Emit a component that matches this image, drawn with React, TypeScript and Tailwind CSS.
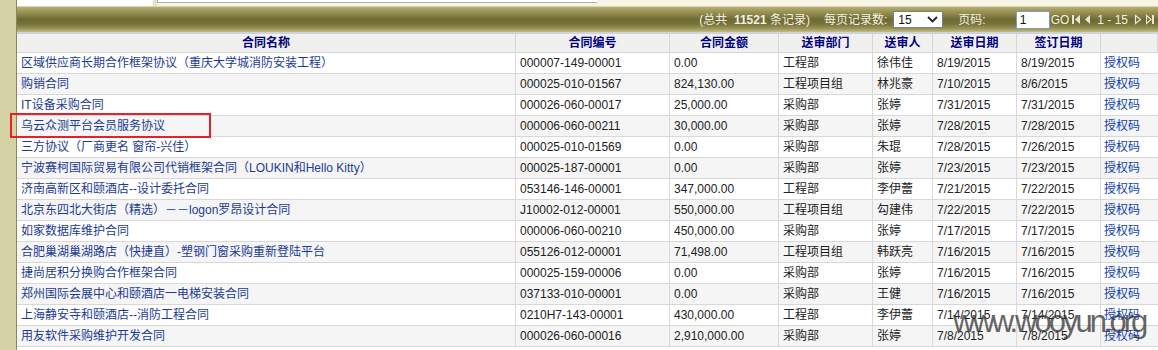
import React from "react"

const rows = [
  ["区域供应商长期合作框架协议（重庆大学城消防安装工程）", "000007-149-00001", "0.00", "工程部", "徐伟佳", "8/19/2015", "8/19/2015"],
  ["购销合同", "000025-010-01567", "824,130.00", "工程项目组", "林兆豪", "7/10/2015", "8/6/2015"],
  ["IT设备采购合同", "000026-060-00017", "25,000.00", "采购部", "张婷", "7/31/2015", "7/31/2015"],
  ["乌云众测平台会员服务协议", "000006-060-00211", "30,000.00", "采购部", "张婷", "7/28/2015", "7/28/2015"],
  ["三方协议（厂商更名 窗帘-兴佳）", "000025-010-01569", "0.00", "采购部", "朱琨", "7/28/2015", "7/26/2015"],
  ["宁波赛柯国际贸易有限公司代销框架合同（LOUKIN和Hello Kitty）", "000025-187-00001", "0.00", "采购部", "张婷", "7/23/2015", "7/23/2015"],
  ["济南高新区和颐酒店--设计委托合同", "053146-146-00001", "347,000.00", "工程部", "李伊蕾", "7/21/2015", "7/22/2015"],
  ["北京东四北大街店（精选）－－logon罗昂设计合同", "J10002-012-00001", "550,000.00", "工程项目组", "勾建伟", "7/22/2015", "7/22/2015"],
  ["如家数据库维护合同", "000006-060-00210", "450,000.00", "采购部", "张婷", "7/17/2015", "7/17/2015"],
  ["合肥巢湖巢湖路店（快捷直）-塑钢门窗采购重新登陆平台", "055126-012-00001", "71,498.00", "工程项目组", "韩跃亮", "7/16/2015", "7/16/2015"],
  ["捷尚居积分换购合作框架合同", "000025-159-00006", "0.00", "采购部", "张婷", "7/16/2015", "7/16/2015"],
  ["郑州国际会展中心和颐酒店一电梯安装合同", "037133-010-00001", "0.00", "采购部", "王健", "7/16/2015", "7/16/2015"],
  ["上海静安寺和颐酒店--消防工程合同", "0210H7-143-00001", "430,000.00", "工程部", "李伊蕾", "7/14/2015", "7/14/2015"],
  ["用友软件采购维护开发合同", "000026-060-00016", "2,910,000.00", "采购部", "张婷", "7/8/2015", "7/8/2015"],
]

const headers = ["合同名称", "合同编号", "合同金额", "送审部门", "送审人", "送审日期", "签订日期", ""]

const cols = "grid grid-cols-[499px_154px_109px_94px_60px_84px_84px_1fr]"

function NavIcon({ dir, bar }: { dir: "l" | "r"; bar?: boolean }) {
  return (
    <svg width="8" height="11" viewBox="0 0 8 11" className="shrink-0">
      {dir === "l" ? (
        <>
          {bar && <rect x="0" y="1" width="2" height="9" fill="#e8e6d4" />}
          <path d={bar ? "M8 1 L3 5.5 L8 10 Z" : "M7 1 L2 5.5 L7 10 Z"} fill="#e8e6d4" />
        </>
      ) : (
        <>
          <path d={bar ? "M0.5 1.5 L5 5.5 L0.5 9.5 Z" : "M1.5 1.5 L6.5 5.5 L1.5 9.5 Z"} fill="none" stroke="#e8e6d4" strokeWidth="1.2" />
          {bar && <rect x="6" y="1" width="2" height="9" fill="#e8e6d4" />}
        </>
      )}
    </svg>
  )
}

export default function App() {
  return (
    <div className="relative w-[1158px] h-[350px] overflow-hidden flex bg-white font-['Liberation_Sans','Noto_Sans_CJK_SC',sans-serif] text-[12px]">
      {/* left frame strip */}
      <div className="w-[17px] shrink-0 bg-[#d5d2a6] border-r border-[#8a8758]" />

      <div className="flex-1 flex flex-col min-w-0">
        {/* top leftover of the frame above */}
        <div className="h-[7px] flex bg-[#f6f4e2] border-b border-[#d8d4a8]">
          <div className="w-[136px] bg-white" />
          <div className="w-[4px] bg-[#e6e3c8]" />
          <div className="w-[440px] bg-white border-l border-b border-[#a8b0b0] h-[3px]" />
        </div>

        {/* toolbar */}
        <div className="h-[25px] flex items-center justify-end pr-[4px] text-[#f2f0e0] bg-[linear-gradient(to_bottom,#b8b27a_0%,#a29c60_12%,#857f45_35%,#6d6a34_50%,#7a7539_70%,#9d9860_88%,#c4bf80_100%)]">
          <span className="whitespace-pre">(总共  <b className="font-bold">11521</b> 条记录)</span>
          <span className="ml-[14px]">每页记录数:</span>
          <div className="ml-[6px] w-[50px] h-[17px] bg-white border border-[#7f7f7f] flex items-center justify-between px-[4px] text-[#111]">
            <span>15</span>
            <svg width="11" height="7" viewBox="0 0 11 7">
              <path d="M1 1 L5.5 5.5 L10 1" fill="none" stroke="#222" strokeWidth="1.8" />
            </svg>
          </div>
          <span className="ml-[15px]">页码:</span>
          <div className="ml-[30px] w-[34px] h-[18px] bg-white border border-[#7f9db9] flex items-center px-[3px] text-[#111]">1</div>
          <span className="ml-[1px]">GO</span>
          <div className="ml-[3px] flex items-center gap-[3px]">
            <NavIcon dir="l" bar />
            <NavIcon dir="l" />
          </div>
          <span className="ml-[6px] whitespace-pre">1 - 15</span>
          <div className="ml-[6px] flex items-center gap-[4px]">
            <NavIcon dir="r" />
            <NavIcon dir="r" bar />
          </div>
        </div>

        <div className="h-[2px] bg-[#cfd0e0]" />

        {/* header */}
        <div className={`${cols} h-[19px] bg-[#f0f0ee] border-b border-[#d6d6d6]`}>
          {headers.map((h, i) => (
            <div key={i} className="flex items-center justify-center border-r border-[#d6d6d6] font-bold text-[#000080] text-[12px]">
              {h}
            </div>
          ))}
        </div>

        {/* rows */}
        {rows.map((r, i) => (
          <div key={i} className={`${cols} h-[21px] shrink-0 border-b border-[#d8d8d8] ${i % 2 === 1 ? "bg-[#f5f5f5]" : "bg-white"}`}>
            <div className="flex items-center pl-[4px] text-[#1b3a96] whitespace-nowrap overflow-hidden border-r border-[#d8d8d8]">{r[0]}</div>
            {r.slice(1).map((c, j) => (
              <div key={j} className="flex items-center pl-[4px] text-[#222] whitespace-nowrap overflow-hidden border-r border-[#d8d8d8]">
                {c}
              </div>
            ))}
            <div className="flex items-center pl-[3px] text-[#0f3db0] whitespace-nowrap">授权码</div>
          </div>
        ))}
      </div>

      {/* red annotation box */}
      <div className="absolute left-[10px] top-[113px] w-[201px] h-[25px] border-2 border-[#e8202a]" />

      {/* watermark */}
      <div className="absolute left-[953px] top-[299px] text-[31px] tracking-[-3px] text-[#333333] opacity-75 font-['Liberation_Sans',sans-serif]">
        www.wooyun.org
      </div>
    </div>
  )
}
